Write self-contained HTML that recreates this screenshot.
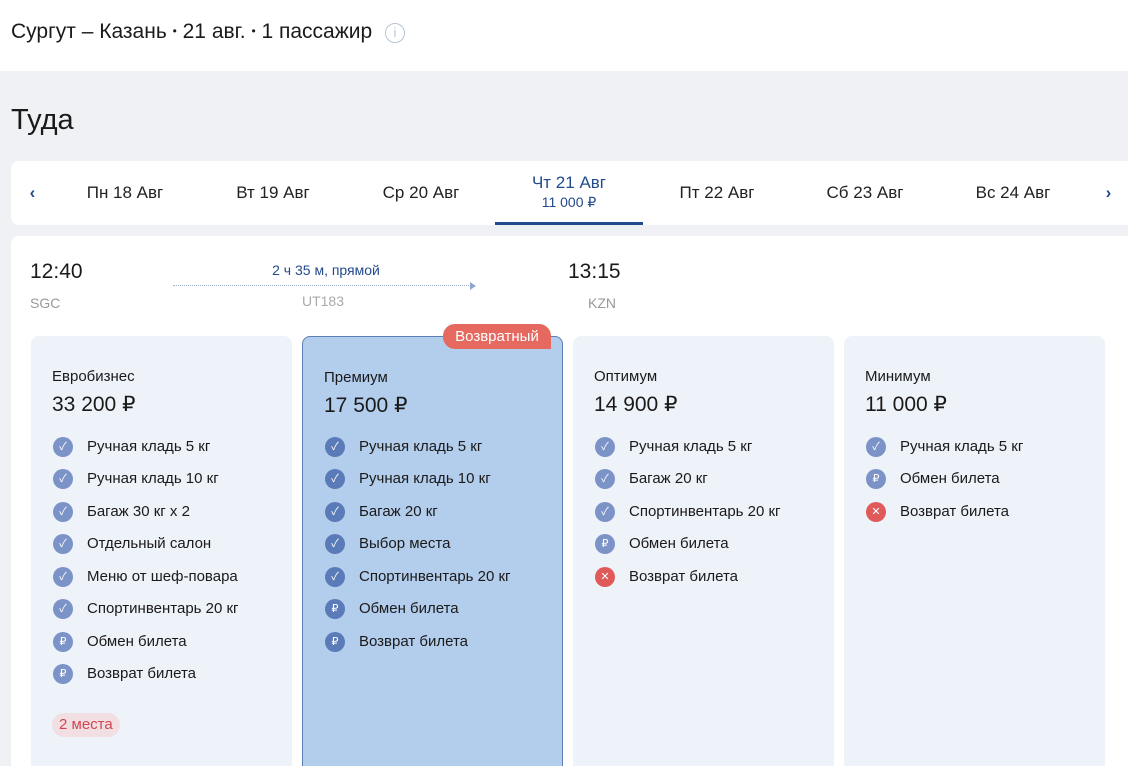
<!DOCTYPE html>
<html><head><meta charset="utf-8"><style>
*{box-sizing:border-box;margin:0;padding:0}
html,body{width:1128px;height:766px;overflow:hidden}
body{background:#eff1f5;font-family:"Liberation Sans","Noto Sans CJK SC",sans-serif;color:#1a1a1a;position:relative}
.abs{position:absolute}
.hdr{left:0;top:0;width:1128px;height:71px;background:#fff}
.dates{left:11px;top:161px;width:1130px;height:64px;background:#fff;border-radius:8px}
.d{position:absolute;top:22px;font-size:17px;color:#222;width:148px;text-align:center}
.flight{left:11px;top:236px;width:1130px;height:540px;background:#fff;border-radius:8px}
.card{position:absolute;top:336px;width:261px;height:440px;background:#eef2f9;border-radius:8px}
.card.p{background:#b3cdec;border:1px solid #5c7fb5}
.t{position:absolute;left:21px;top:32px;font-size:15px}
.pr{position:absolute;left:21px;top:56px;font-size:21px}
.row{position:absolute;left:22px;font-size:15px;height:20px;line-height:20px}
.ic{position:absolute;left:0;top:0;width:20px;height:20px;border-radius:50%;background:#7b93c6;color:#fff;font-size:11px;text-align:center;line-height:20px}
.p .ic{background:#5a7ab8}
.ic.x{background:#e05a5a}
.row span{position:absolute;left:34px;white-space:nowrap}
</style></head><body>
<div class="abs hdr"></div>
<div class="abs" style="left:11px;top:20px;font-size:21px;white-space:nowrap">Сургут – Казань <span style="font-size:12px;vertical-align:3px">•</span> 21 авг. <span style="font-size:12px;vertical-align:3px">•</span> 1 пассажир</div>
<div class="abs" style="left:385px;top:23px;width:20px;height:20px;border:1.5px solid #b8c4d8;border-radius:50%;color:#b8c4d8;font-size:13px;text-align:center;line-height:17px">i</div>
<div class="abs" style="left:11px;top:104px;font-size:29px">Туда</div>
<div class="abs dates">
<div class="d" style="left:14px;width:15px;color:#234b8c;font-weight:bold">‹</div>
<div class="d" style="left:40px">Пн 18 Авг</div>
<div class="d" style="left:188px">Вт 19 Авг</div>
<div class="d" style="left:336px">Ср 20 Авг</div>
<div class="d" style="left:484px;top:12px;color:#234b8c">Чт 21 Авг<div style="font-size:14px;margin-top:1px">11 000 ₽</div></div>
<div style="position:absolute;left:484px;top:61px;width:148px;height:3px;background:#234b8c"></div>
<div class="d" style="left:632px">Пт 22 Авг</div>
<div class="d" style="left:780px">Сб 23 Авг</div>
<div class="d" style="left:928px">Вс 24 Авг</div>
<div class="d" style="left:1090px;width:15px;color:#234b8c;font-weight:bold">›</div>
</div>
<div class="abs flight"></div>
<div class="abs" style="left:30px;top:260px;font-size:21px">12:40</div>
<div class="abs" style="left:30px;top:295px;font-size:14px;color:#999">SGC</div>
<div class="abs" style="left:173px;top:262px;width:306px;text-align:center;font-size:14px;color:#234b8c">2 ч 35 м, прямой</div>
<div class="abs" style="left:173px;top:285px;width:300px;border-top:1.5px dotted #9fb2d3"></div>
<div class="abs" style="left:470px;top:282px;width:0;height:0;border-left:6px solid #8fa6cf;border-top:4px solid transparent;border-bottom:4px solid transparent"></div>
<div class="abs" style="left:173px;top:293px;width:300px;text-align:center;font-size:14px;color:#aaa">UT183</div>
<div class="abs" style="left:568px;top:260px;font-size:21px">13:15</div>
<div class="abs" style="left:588px;top:295px;font-size:14px;color:#999">KZN</div>

<div class="card" style="left:31px"><div class="t">Евробизнес</div><div class="pr">33 200 ₽</div>
<div class="row" style="top:101px"><div class="ic">✓</div><span>Ручная кладь 5 кг</span></div>
<div class="row" style="top:133px"><div class="ic">✓</div><span>Ручная кладь 10 кг</span></div>
<div class="row" style="top:166px"><div class="ic">✓</div><span>Багаж 30 кг х 2</span></div>
<div class="row" style="top:198px"><div class="ic">✓</div><span>Отдельный салон</span></div>
<div class="row" style="top:231px"><div class="ic">✓</div><span>Меню от шеф-повара</span></div>
<div class="row" style="top:263px"><div class="ic">✓</div><span>Спортинвентарь 20 кг</span></div>
<div class="row" style="top:296px"><div class="ic">₽</div><span>Обмен билета</span></div>
<div class="row" style="top:328px"><div class="ic">₽</div><span>Возврат билета</span></div>
<div style="position:absolute;left:21px;top:377px;height:24px;padding:0 7px;border-radius:12px;background:#f2dfe3;color:#d0454f;font-size:15px;line-height:24px">2 места</div>
</div>
<div class="card p" style="left:302px"><div class="t">Премиум</div><div class="pr">17 500 ₽</div>
<div class="row" style="top:100px"><div class="ic">✓</div><span>Ручная кладь 5 кг</span></div>
<div class="row" style="top:132px"><div class="ic">✓</div><span>Ручная кладь 10 кг</span></div>
<div class="row" style="top:165px"><div class="ic">✓</div><span>Багаж 20 кг</span></div>
<div class="row" style="top:197px"><div class="ic">✓</div><span>Выбор места</span></div>
<div class="row" style="top:230px"><div class="ic">✓</div><span>Спортинвентарь 20 кг</span></div>
<div class="row" style="top:262px"><div class="ic">₽</div><span>Обмен билета</span></div>
<div class="row" style="top:295px"><div class="ic">₽</div><span>Возврат билета</span></div>
</div>
<div class="abs" style="left:443px;top:324px;width:108px;height:25px;background:#e5695f;color:#fff;border-radius:12px 12px 0 12px;font-size:15px;text-align:center;line-height:25px">Возвратный</div>
<div class="card" style="left:573px"><div class="t">Оптимум</div><div class="pr">14 900 ₽</div>
<div class="row" style="top:101px"><div class="ic">✓</div><span>Ручная кладь 5 кг</span></div>
<div class="row" style="top:133px"><div class="ic">✓</div><span>Багаж 20 кг</span></div>
<div class="row" style="top:166px"><div class="ic">✓</div><span>Спортинвентарь 20 кг</span></div>
<div class="row" style="top:198px"><div class="ic">₽</div><span>Обмен билета</span></div>
<div class="row" style="top:231px"><div class="ic x">✕</div><span>Возврат билета</span></div>
</div>
<div class="card" style="left:844px"><div class="t">Минимум</div><div class="pr">11 000 ₽</div>
<div class="row" style="top:101px"><div class="ic">✓</div><span>Ручная кладь 5 кг</span></div>
<div class="row" style="top:133px"><div class="ic">₽</div><span>Обмен билета</span></div>
<div class="row" style="top:166px"><div class="ic x">✕</div><span>Возврат билета</span></div>
</div>
</body></html>
